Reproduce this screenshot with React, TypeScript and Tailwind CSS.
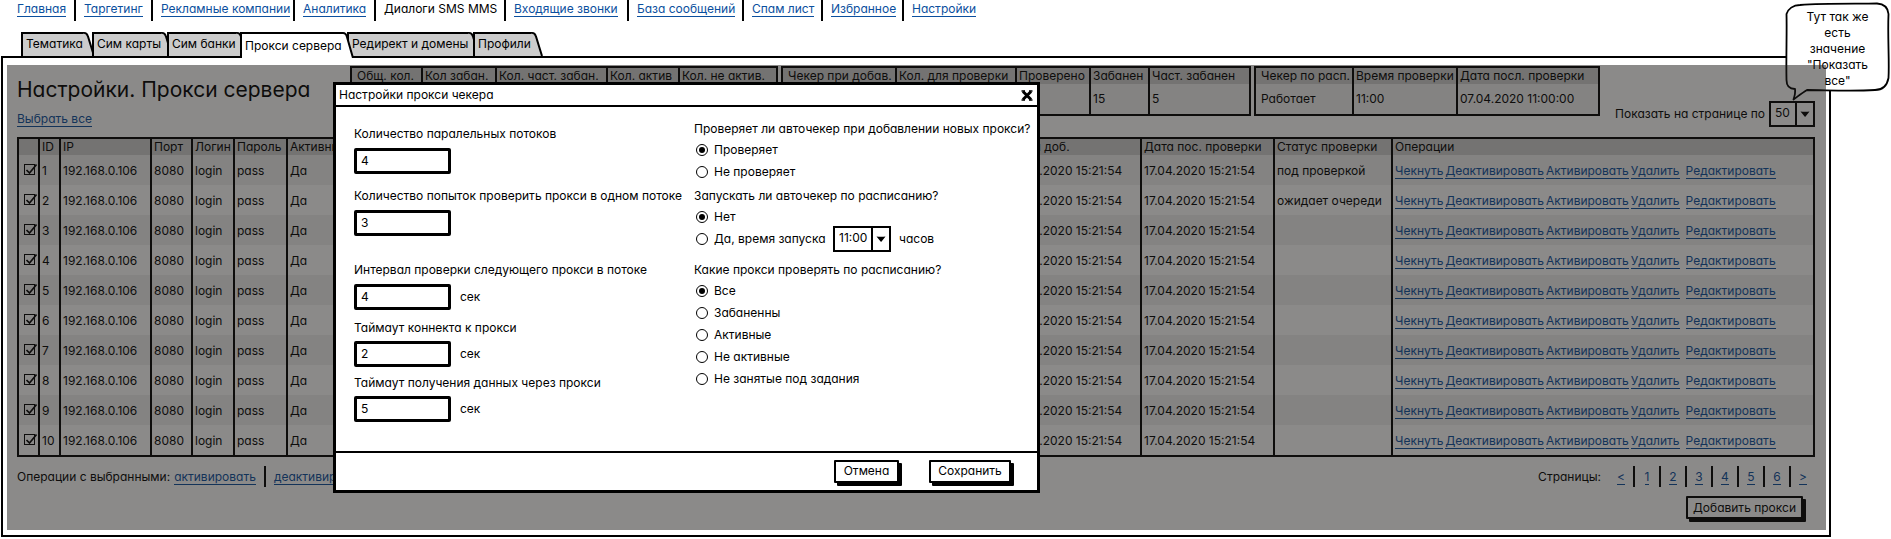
import type { ReactNode } from 'react';

const INK = 'border-black';

const navItems = [
  { label: 'Главная', width: 'w-[57px]' },
  { label: 'Таргетинг', width: 'w-[67px]' },
  { label: 'Рекламные компании', width: 'w-[132px]' },
  { label: 'Аналитика', width: 'w-[71px]' },
  { label: 'Диалоги SMS MMS', width: 'w-[120px]', current: true },
  { label: 'Входящие звонки', width: 'w-[113px]' },
  { label: 'База сообщений', width: 'w-[105px]' },
  { label: 'Спам лист', width: 'w-[69px]' },
  { label: 'Избранное', width: 'w-[71px]' },
  { label: 'Настройки', width: 'w-[66px]' },
];

const tabs = [
  { label: 'Тематика', width: 'w-[71px]' },
  { label: 'Сим карты', width: 'w-[75px]' },
  { label: 'Сим банки', width: 'w-[73px]' },
  { label: 'Прокси сервера', width: 'w-[107px]', active: true },
  { label: 'Редирект и домены', width: 'w-[126px]' },
  { label: 'Профили', width: 'w-[65px]' },
];

const columns = [
  { label: '', width: 'w-[19px]' },
  { label: 'ID', width: 'w-[21px]' },
  { label: 'IP', width: 'w-[91px]' },
  { label: 'Порт', width: 'w-[41px]' },
  { label: 'Логин', width: 'w-[42px]' },
  { label: 'Пароль', width: 'w-[53px]' },
  { label: 'Активный', width: '' },
  { label: 'Дата доб.', width: 'w-[133px]' },
  { label: 'Дата пос. проверки', width: 'w-[133px]' },
  { label: 'Статус проверки', width: 'w-[118px]' },
  { label: 'Операции', width: 'w-[422px]' },
];

const statuses = ['под проверкой', 'ожидает очереди', '', '', '', '', '', '', '', ''];

const operations = ['Чекнуть', 'Деактивировать', 'Активировать', 'Удалить', 'Редактировать'];

const pages = ['<', '1', '2', '3', '4', '5', '6', '>'];

function Link({ children }: { children: ReactNode }) {
  return (
    <a href="#" className="inline-block border-b border-[#0b4f9e] leading-[15px] text-[#0b4f9e]">
      {children}
    </a>
  );
}

function Separator() {
  return <span className="h-[21px] w-[2px] shrink-0 bg-black" />;
}

function Tab({ label, width, active }: { label: string; width: string; active?: boolean }) {
  return (
    <button
      type="button"
      role="tab"
      aria-selected={!!active}
      className={`relative flex shrink-0 ${width} ${active ? 'z-10 h-[26px]' : 'h-6'}`}
    >
      <span
        className={`flex h-full flex-1 items-center border-t-2 border-l-2 pl-[3px] whitespace-nowrap ${INK} ${
          active ? 'bg-white' : 'bg-[#cccccc] pb-[3px]'
        }`}
      >
        <span className="relative z-10">{label}</span>
      </span>
      <svg
        className="-mr-[3px] h-full w-3 shrink-0"
        viewBox="0 0 12 26"
        preserveAspectRatio="none"
        aria-hidden="true"
      >
        <path d="M0 0H1Q4 0 5 4L11 26H0Z" fill={active ? '#ffffff' : '#cccccc'} />
        <path d="M0 1H1Q4 1 5 5L11 26" fill="none" stroke="#000" strokeWidth="2" />
      </svg>
    </button>
  );
}

function StatTable({
  head,
  values,
  className,
}: {
  head: { label: string; width: string }[];
  values: string[];
  className: string;
}) {
  return (
    <table className={`table-fixed border-separate border-spacing-0 border-2 ${INK} ${className}`}>
      <thead>
        <tr className="h-4 bg-[#d0d0d0]">
          {head.map((h, i) => (
            <th
              key={h.label}
              className={`p-0 text-left font-normal whitespace-nowrap ${h.width} ${
                i ? 'border-l-2 border-black pl-0.5' : 'pl-[5px]'
              }`}
            >
              {h.label}
            </th>
          ))}
        </tr>
      </thead>
      <tbody>
        <tr className="h-[30px] bg-[#f0f0f0]">
          {values.map((v, i) => (
            <td key={i} className={`p-0 ${i ? 'border-l-2 border-black pl-0.5' : 'pl-[5px]'}`}>
              {v}
            </td>
          ))}
        </tr>
      </tbody>
    </table>
  );
}

function Dropdown({ id, value, className }: { id: string; value: string; className: string }) {
  return (
    <span className={`relative flex h-[26px] shrink-0 border-2 bg-white ${INK} ${className}`}>
      <select
        id={id}
        className="w-full appearance-none bg-transparent pb-0.5 pl-1 outline-none"
      >
        <option>{value}</option>
      </select>
      <span className="pointer-events-none absolute inset-y-0 right-0 flex w-[18px] items-center justify-center border-l-2 border-black">
        <svg viewBox="0 0 10 6" className="h-[6px] w-[10px]" aria-hidden="true">
          <path d="M0.5 0.5Q5 1.2 9.5 0.5L5.4 5.8H4.8Z" fill="#000" />
        </svg>
      </span>
    </span>
  );
}

function SketchButton({ children, className }: { children: ReactNode; className: string }) {
  return (
    <button
      type="button"
      className={`h-[23px] rounded-[1px] border-2 bg-white shadow-[3px_3px_0_0_#000] ${INK} ${className}`}
    >
      {children}
    </button>
  );
}

function NumberField({
  id,
  label,
  value,
  unit,
  gap,
}: {
  id: string;
  label: string;
  value: string;
  unit?: string;
  gap: string;
}) {
  return (
    <div className={`flex flex-col ${gap}`}>
      <label htmlFor={id} className="h-5 leading-5 whitespace-nowrap">
        {label}
      </label>
      <div className="flex items-center gap-[9px]">
        <input
          id={id}
          defaultValue={value}
          className={`h-[26px] w-[97px] rounded-[2px] border-[3px] bg-white pb-0.5 pl-1 outline-none ${INK}`}
        />
        {unit && <span>{unit}</span>}
      </div>
    </div>
  );
}

function Radio({
  name,
  label,
  checked,
}: {
  name: string;
  label: string;
  checked?: boolean;
}) {
  return (
    <div className="flex h-[22px] items-center pl-0.5">
      <label className="flex items-center gap-[6px] whitespace-nowrap">
        <input
          type="radio"
          name={name}
          defaultChecked={checked}
          className="grid h-3 w-3 appearance-none place-content-center rounded-full border border-black bg-white before:h-[6px] before:w-[6px] before:rounded-full before:content-[''] checked:before:bg-black"
        />
        {label}
      </label>
    </div>
  );
}

function RowCheckbox({ id }: { id: number }) {
  return (
    <span className="relative flex h-3 w-3">
      <input
        type="checkbox"
        defaultChecked
        aria-label={`${id}`}
        className="h-[11px] w-[11px] appearance-none border border-black"
      />
      <svg
        viewBox="0 0 14 13"
        className="pointer-events-none absolute -top-[1px] left-0 h-[13px] w-[14px]"
        aria-hidden="true"
      >
        <path d="M2.5 7L5.5 10L12.5 1.5" fill="none" stroke="#000" strokeWidth="1.7" />
      </svg>
    </span>
  );
}

function NoteBubble() {
  return (
    <div className="absolute -top-[56px] -right-[61px] w-[105px]">
      <svg viewBox="0 0 105 99" className="absolute top-0 left-0 h-[99px] w-[105px]" aria-hidden="true">
        <path
          d="M15 3C40 1 75 2 92 1.5C99 2 103 6 103.5 12C102.500 35 104.500 60 103.500 76C102 84 97 88 90 88C65 89.500 40 88 22 88C17 91 12 95 8.500 97.500C10 93 10.500 90 10 87C4 87 1.500 83 1.500 78C1 55 2 30 1.500 12C3 7 8 3 15 3Z"
          fill="#fff"
          stroke="#000"
          strokeWidth="1.800"
          strokeLinejoin="round"
        />
      </svg>
      <p className="relative px-4 pt-[7px] text-center leading-4">
        Тут так же есть значение "Показать все"
      </p>
    </div>
  );
}

function CheckerDialog() {
  return (
    <section
      role="dialog"
      aria-labelledby="dialog-title"
      className={`absolute top-[24px] left-[330px] z-30 w-[707px] border-[3px] bg-white ${INK}`}
    >
      <header className="flex h-[22px] items-center justify-between border-b-2 border-black pr-1 pl-[3px]">
        <h2 id="dialog-title">Настройки прокси чекера</h2>
        <button type="button" aria-label="Закрыть" className="flex">
          <svg viewBox="0 0 12 11" className="h-[11px] w-3" aria-hidden="true">
            <path d="M2 1.500L10 9.500M10 1.500L2 9.500" stroke="#000" strokeWidth="3" />
            <path d="M0.500 1H4M8 1H11.500M0.500 10H4M8 10H11.500" stroke="#000" strokeWidth="1.500" />
          </svg>
        </button>
      </header>
      <div className="flex h-[344px] pl-[18px]">
        <div className="flex w-[340px] flex-col pt-[17px]">
          <NumberField id="threads" label="Количество паралельных потоков" value="4" gap="gap-1" />
          <div className="h-3" />
          <NumberField
            id="attempts"
            label="Количество попыток проверить прокси в одном потоке"
            value="3"
            gap="gap-1"
          />
          <div className="h-6" />
          <NumberField
            id="interval"
            label="Интервал проверки следующего прокси в потоке"
            value="4"
            unit="сек"
            gap="gap-1"
          />
          <div className="h-2" />
          <NumberField id="connect" label="Таймаут коннекта к прокси" value="2" unit="сек" gap="gap-[3px]" />
          <div className="h-[6px]" />
          <NumberField
            id="receive"
            label="Таймаут получения данных через прокси"
            value="5"
            unit="сек"
            gap="gap-[3px]"
          />
        </div>
        <div className="flex flex-1 flex-col pt-3">
          <fieldset>
            <legend className="h-5 leading-5 whitespace-nowrap">
              Проверяет ли авточекер при добавлении новых прокси?
            </legend>
            <Radio name="on-add" label="Проверяет" checked />
            <Radio name="on-add" label="Не проверяет" />
          </fieldset>
          <fieldset className="mt-[3px]">
            <legend className="h-5 leading-5">Запускать ли авточекер по расписанию?</legend>
            <Radio name="schedule" label="Нет" checked />
            <div className="grid grid-cols-[139px_1fr] items-center">
              <Radio name="schedule" label="Да, время запуска" />
              <div className="flex h-[22px] items-center gap-2">
                <Dropdown id="start-time" value="11:00" className="w-[58px]" />
                <label htmlFor="start-time">часов</label>
              </div>
            </div>
          </fieldset>
          <fieldset className="mt-[10px]">
            <legend className="h-5 leading-5">Какие прокси проверять по расписанию?</legend>
            <Radio name="scope" label="Все" checked />
            <Radio name="scope" label="Забаненны" />
            <Radio name="scope" label="Активные" />
            <Radio name="scope" label="Не активные" />
            <Radio name="scope" label="Не занятые под задания" />
          </fieldset>
        </div>
      </div>
      <footer className="flex h-[39px] items-center justify-end gap-[30px] border-t-2 border-black pr-[26px] pb-px">
        <SketchButton className="w-[65px]">Отмена</SketchButton>
        <SketchButton className="w-[82px]">Сохранить</SketchButton>
      </footer>
    </section>
  );
}

export default function App() {
  return (
    <div className="overflow-hidden bg-white pl-px font-['Inter','Liberation_Sans',sans-serif] text-[12px] leading-4 text-black [font-feature-settings:'cv11']">
      <nav className="flex h-8 items-start pl-4 whitespace-nowrap">
        {navItems.map((item, i) => (
          <div key={item.label} className="flex h-[21px] items-start">
            {i > 0 && (
              <span className="mr-2 flex">
                <Separator />
              </span>
            )}
            <span className={`pt-px ${item.width}`}>
              {item.current ? <span aria-current="page">{item.label}</span> : <Link>{item.label}</Link>}
            </span>
          </div>
        ))}
      </nav>

      <div role="tablist" className="-mb-[2px] flex h-[26px] pl-5">
        {tabs.map((tab) => (
          <Tab key={tab.label} {...tab} />
        ))}
      </div>

      <main className={`relative mr-[60px] border-2 px-[14px] pt-2 pb-[15px] ${INK}`}>
        <div className="flex h-[71px] items-start gap-[3px]">
          <div className="w-[330px] shrink-0 whitespace-nowrap">
            <h1 className="h-[45px] pt-2 text-[21px] leading-8">Настройки. Прокси сервера</h1>
            <Link>Выбрать все</Link>
          </div>
          <StatTable
            className="w-[428px] shrink-0"
            head={[
              { label: 'Общ. кол.', width: 'w-[69px]' },
              { label: 'Кол забан.', width: 'w-[74px]' },
              { label: 'Кол. част. забан.', width: 'w-[111px]' },
              { label: 'Кол. актив', width: 'w-[72px]' },
              { label: 'Кол. не актив.', width: 'w-[98px]' },
            ]}
            values={['', '', '', '', '']}
          />
          <StatTable
            className="w-[470px] shrink-0"
            head={[
              { label: 'Чекер при добав.', width: 'w-[112px]' },
              { label: 'Кол. для проверки', width: 'w-[120px]' },
              { label: 'Проверено', width: 'w-[74px]' },
              { label: 'Забанен', width: 'w-[59px]' },
              { label: 'Част. забанен', width: 'w-[101px]' },
            ]}
            values={['', '', '', '15', '5']}
          />
          <StatTable
            className="w-[346px] shrink-0"
            head={[
              { label: 'Чекер по расп.', width: 'w-[96px]' },
              { label: 'Время проверки', width: 'w-[104px]' },
              { label: 'Дата посл. проверки', width: 'w-[142px]' },
            ]}
            values={['Работает', '11:00', '07.04.2020 11:00:00']}
          />
          <div className="ml-auto flex items-center gap-1 pt-[35px] whitespace-nowrap">
            <label htmlFor="page-size">Показать на странице по</label>
            <Dropdown id="page-size" value="50" className="w-[46px]" />
          </div>
        </div>

        <table className={`w-full table-fixed border-separate border-spacing-0 border-2 ${INK}`}>
          <thead>
            <tr className="h-4 bg-[#d0d0d0]">
              {columns.map((c, i) => (
                <th
                  key={i}
                  className={`p-0 text-left font-normal whitespace-nowrap ${c.width} ${
                    i ? 'border-l-2 border-black pl-0.5' : ''
                  }`}
                >
                  {c.label}
                </th>
              ))}
            </tr>
          </thead>
          <tbody className="[&_td+td]:border-l-2 [&_td+td]:border-black [&_td+td]:pl-0.5">
            {statuses.map((status, i) => (
              <tr key={i} className="h-[30px] odd:bg-[#f0f0f0]">
                <td className="p-0 pl-[5px]">
                  <RowCheckbox id={i + 1} />
                </td>
                <td className="p-0 pt-0.5">{i + 1}</td>
                <td className="p-0 pt-0.5">192.168.0.106</td>
                <td className="p-0 pt-0.5">8080</td>
                <td className="p-0 pt-0.5">login</td>
                <td className="p-0 pt-0.5">pass</td>
                <td className="p-0 pt-0.5">Да</td>
                <td className="p-0 pt-0.5">17.04.2020 15:21:54</td>
                <td className="p-0 pt-0.5">17.04.2020 15:21:54</td>
                <td className="p-0 pt-0.5 whitespace-nowrap">{status}</td>
                <td className="p-0 pt-0.5">
                  <div className="flex gap-0.5 whitespace-nowrap">
                    {operations.map((op) => (
                      <span key={op} className="last:ml-1">
                        <Link>{op}</Link>
                      </span>
                    ))}
                  </div>
                </td>
              </tr>
            ))}
          </tbody>
        </table>

        <div className="flex h-[39px] items-center justify-between whitespace-nowrap">
          <div className="flex items-center gap-2">
            <span className="flex items-center gap-1">
              Операции с выбранными:
              <Link>активировать</Link>
            </span>
            <Separator />
            <Link>деактивировать</Link>
          </div>
          <div className="flex items-center">
            <span className="mr-2">Страницы:</span>
            {pages.map((p, i) => (
              <span key={p} className="flex items-center">
                {i > 0 && <Separator />}
                <span className="flex w-6 justify-center">
                  <Link>{p}</Link>
                </span>
              </span>
            ))}
          </div>
        </div>
        <div className="flex justify-end pr-3 pb-px">
          <SketchButton className="w-[117px]">Добавить прокси</SketchButton>
        </div>

        <NoteBubble />
        <div className="pointer-events-none absolute top-[7px] right-[3px] bottom-[5px] left-[4px] z-20 bg-[#1c1a17]/51" />
        <CheckerDialog />
      </main>
    </div>
  );
}
